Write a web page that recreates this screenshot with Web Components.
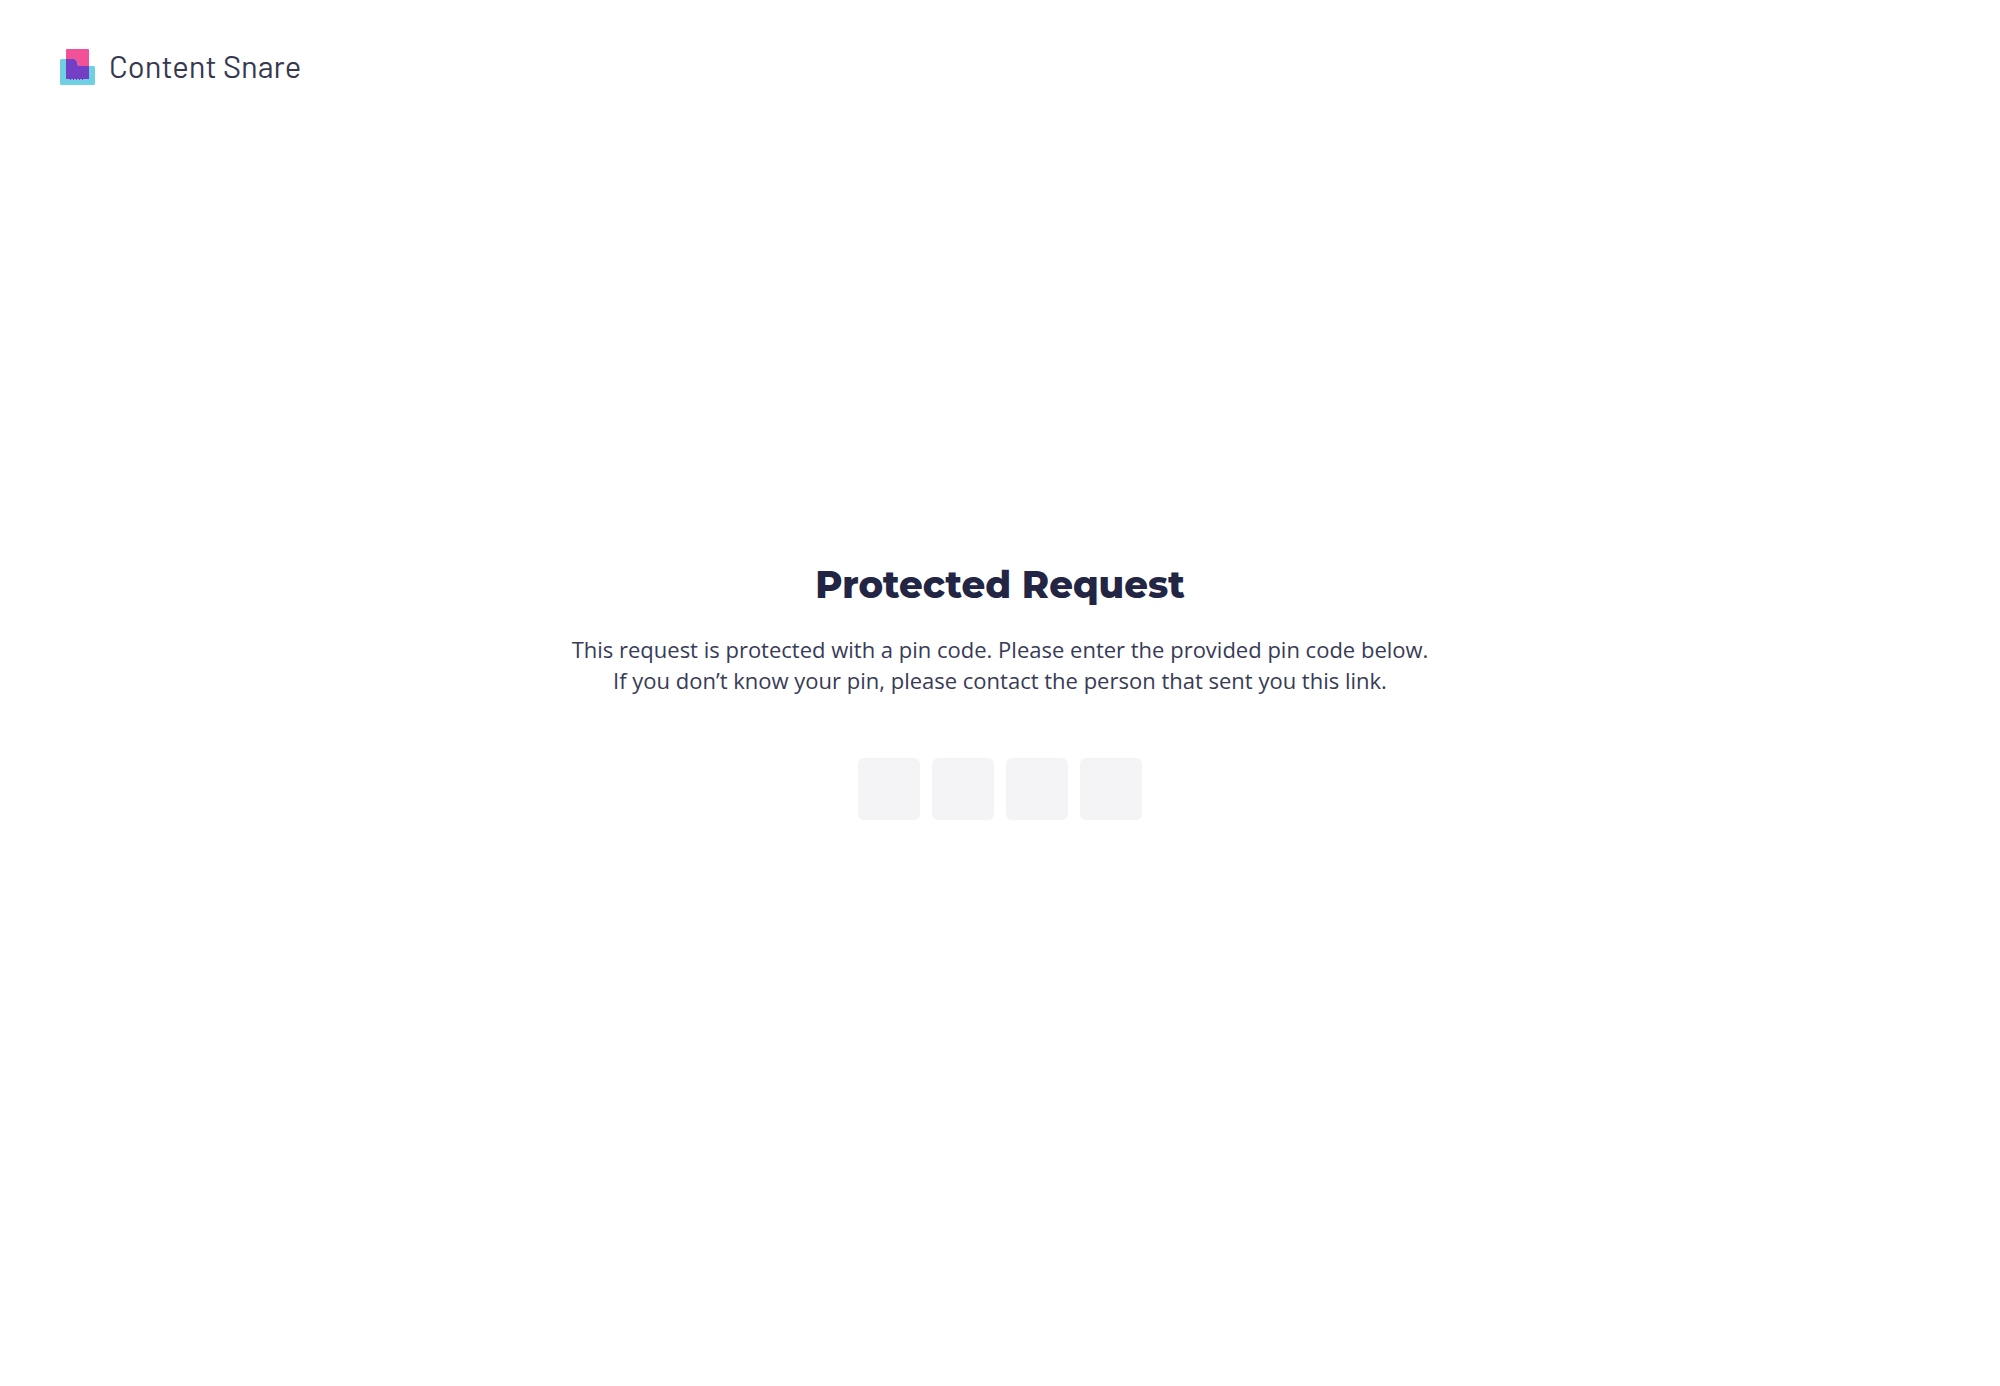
<!DOCTYPE html>
<html lang="en">
<head>
<meta charset="utf-8">
<meta name="viewport" content="width=device-width, initial-scale=1">
<title>Protected Request – Content Snare</title>
<style>
body { margin: 0; background: #fff; color: #222543; font-family: "Open Sans", sans-serif; }
</style>
</head>
<body>
<pin-page>
  <brand-logo slot="header">Content Snare</brand-logo>
  <pin-request>
    <span slot="title">Protected Request</span>
    <span slot="lead">This request is protected with a pin code. Please enter the provided pin code below.<br>If you don’t know your pin, please contact the person that sent you this link.</span>
    <pin-input length="4"></pin-input>
  </pin-request>
</pin-page>
<script>
function attach(host, html) {
  const template = document.createElement('template');
  template.innerHTML = html;
  const root = host.attachShadow({ mode: 'open' });
  root.append(template.content.cloneNode(true));
  return root;
}

/* Full-height page: header on top, content centred in the window */
customElements.define('pin-page', class extends HTMLElement {
  constructor() {
    super();
    attach(this, `
      <style>
        :host { display: grid; grid-template-rows: 1fr auto 1fr; min-height: 100vh; }
        header { display: flex; align-items: flex-start; padding: 48px 60px; }
        main { padding: 0 24px 1px; }
      </style>
      <header><slot name="header"></slot></header>
      <main><slot></slot></main>`);
  }
});

customElements.define('brand-logo', class extends HTMLElement {
  constructor() {
    super();
    attach(this, `
      <style>
        :host { display: flex; align-items: flex-start; gap: 14px; font: 400 31px/36px Barlow, Roboto, sans-serif; color: #35384f; }
        svg { flex: none; display: block; }
      </style>
      <svg width="35" height="38" viewBox="0 0 35 38" aria-hidden="true">
        <path fill="#f25097" d="M7 1h21q1 0 1 1v16H19q-2-1-2-3.500q-.5-3.500-3-3.500H6V2q0-1 1-1z"/>
        <path fill="#6fcfe3" d="M1.500 11H14q2.500 0 3 3.500q0 2.500 2 3.500h14.500q1.500 0 1.500 1.500v16q0 1.500-1.500 1.500h-32q-1.500 0-1.500-1.500v-23q0-1.500 1.500-1.500z"/>
        <path fill="#743fc4" d="M6 11h8q2.500 0 3 3.500q0 2.500 2 3.500h10v13H6z"/>
        <path stroke="#743fc4" stroke-dasharray="1 2" d="M10 31.500h15"/>
      </svg>
      <span><slot></slot></span>`);
  }
});

customElements.define('pin-request', class extends HTMLElement {
  constructor() {
    super();
    attach(this, `
      <style>
        :host { display: flex; flex-direction: column; align-items: center; text-align: center; }
        h1 { margin: 0 0 29px; font: 800 37px/40px Montserrat, Inter, sans-serif; color: #222543; }
        p { margin: 0 0 62px; font-size: 22px; line-height: 31px; color: #383b56; }
      </style>
      <h1><slot name="title"></slot></h1>
      <p><slot name="lead"></slot></p>
      <slot></slot>`);
  }
});

/* One single-digit box per pin character; focus moves on after each digit */
customElements.define('pin-input', class extends HTMLElement {
  constructor() {
    super();
    const root = attach(this, `
      <style>
        :host { display: block; }
        form { display: flex; gap: 12px; }
        label { display: block; }
        input { display: block; box-sizing: border-box; width: 62px; height: 62px; margin: 0; padding: 0;
          border: 0; border-radius: 6px; background: #f4f4f7; color: #222543;
          font: 600 24px "Open Sans", sans-serif; text-align: center; }
        input:focus { outline: 2px solid #743fc4; }
      </style>
      <form></form>`);
    const form = root.querySelector('form');
    const count = Number(this.getAttribute('length')) || 4;
    for (let i = 1; i <= count; i++) {
      const label = document.createElement('label');
      const input = document.createElement('input');
      input.type = 'text';
      input.inputMode = 'numeric';
      input.maxLength = 1;
      input.autocomplete = 'off';
      input.setAttribute('aria-label', 'Pin digit ' + i);
      input.addEventListener('input', () => {
        const next = label.nextElementSibling;
        if (input.value && next) next.firstElementChild.focus();
      });
      label.append(input);
      form.append(label);
    }
  }
});
</script>
</body>
</html>
